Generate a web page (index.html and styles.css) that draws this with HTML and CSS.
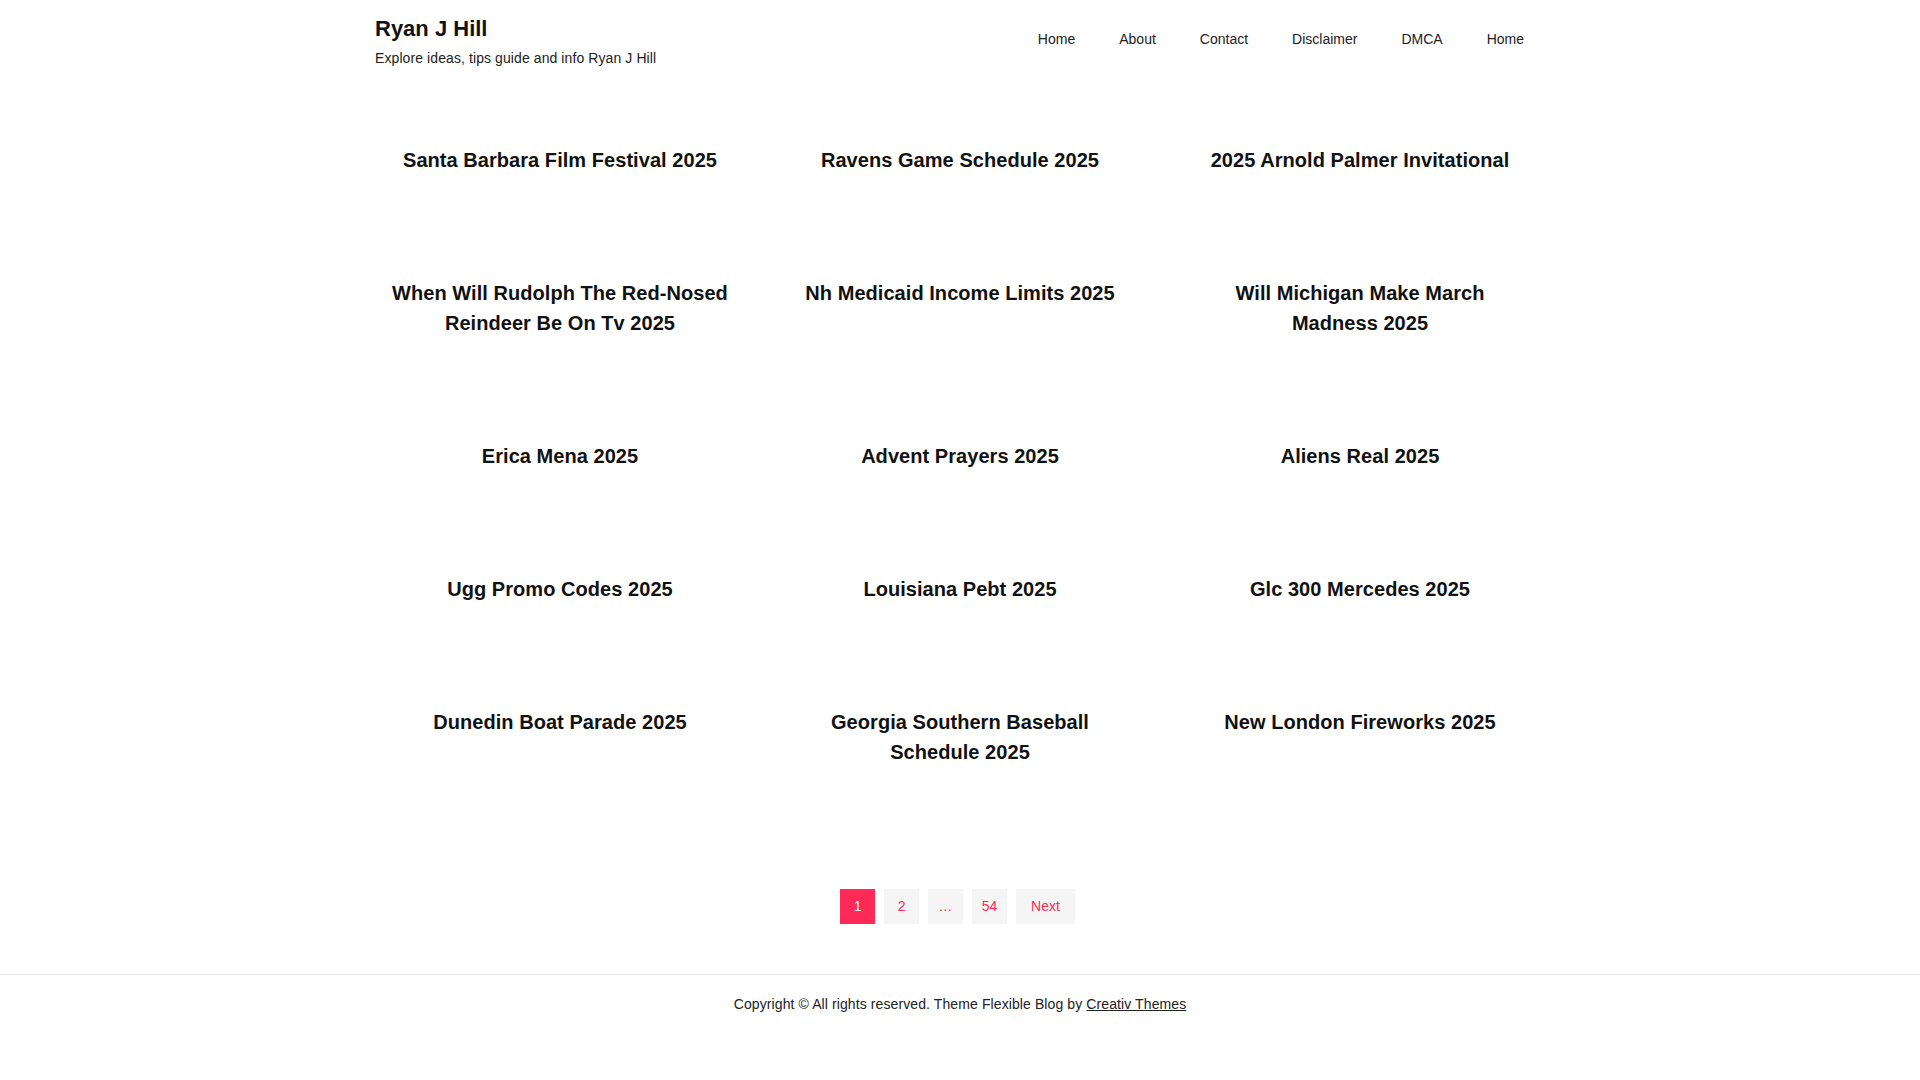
FILE: index.html
```html
<!DOCTYPE html>
<html lang="en">
<head>
<meta charset="utf-8">
<title>Ryan J Hill</title>
<link rel="stylesheet" href="styles.css">
</head>
<body>
<header class="site-header">
  <div class="container header-inner">
    <div class="branding">
      <div class="site-title">Ryan J Hill</div>
      <div class="site-desc">Explore ideas, tips guide and info Ryan J Hill</div>
    </div>
    <nav class="main-nav">
      <a href="#">Home</a>
      <a href="#">About</a>
      <a href="#">Contact</a>
      <a href="#">Disclaimer</a>
      <a href="#">DMCA</a>
      <a href="#">Home</a>
    </nav>
  </div>
</header>
<main class="container main">
  <div class="posts">
    <article class="post"><h2 class="post-title">Santa Barbara Film Festival 2025</h2></article>
    <article class="post"><h2 class="post-title">Ravens Game Schedule 2025</h2></article>
    <article class="post"><h2 class="post-title">2025 Arnold Palmer Invitational</h2></article>
    <article class="post"><h2 class="post-title">When Will Rudolph The Red-Nosed Reindeer Be On Tv 2025</h2></article>
    <article class="post"><h2 class="post-title">Nh Medicaid Income Limits 2025</h2></article>
    <article class="post"><h2 class="post-title">Will Michigan Make March Madness 2025</h2></article>
    <article class="post"><h2 class="post-title">Erica Mena 2025</h2></article>
    <article class="post"><h2 class="post-title">Advent Prayers 2025</h2></article>
    <article class="post"><h2 class="post-title">Aliens Real 2025</h2></article>
    <article class="post"><h2 class="post-title">Ugg Promo Codes 2025</h2></article>
    <article class="post"><h2 class="post-title">Louisiana Pebt 2025</h2></article>
    <article class="post"><h2 class="post-title">Glc 300 Mercedes 2025</h2></article>
    <article class="post"><h2 class="post-title">Dunedin Boat Parade 2025</h2></article>
    <article class="post"><h2 class="post-title">Georgia Southern Baseball Schedule 2025</h2></article>
    <article class="post"><h2 class="post-title">New London Fireworks 2025</h2></article>
  </div>
  <nav class="pagination">
    <span class="page current">1</span>
    <a class="page" href="#">2</a>
    <span class="page dots">…</span>
    <a class="page" href="#">54</a>
    <a class="page next" href="#">Next</a>
  </nav>
</main>
<footer class="site-footer">
  <p class="copyright">Copyright © All rights reserved. Theme Flexible Blog by <a href="#">Creativ Themes</a></p>
</footer>
</body>
</html>
```
FILE: styles.css
```css
html, body {
  margin: 0;
  padding: 0;
  background: #fff;
}
body {
  font-family: "Liberation Sans", Arial, sans-serif;
  color: #222;
}
.container {
  width: 1170px;
  margin: 0 auto;
}
.site-header {
  padding-top: 15px;
}
.header-inner {
  display: flex;
  justify-content: space-between;
  align-items: flex-start;
}
.site-title {
  font-size: 22px;
  line-height: 27px;
  font-weight: bold;
  color: #111;
}
.site-desc {
  margin-top: 6px;
  font-size: 14px;
  line-height: 21px;
  letter-spacing: 0.09px;
  color: #222;
}
.main-nav {
  display: flex;
  margin-top: 13.5px;
  margin-right: -1px;
}
.main-nav a {
  padding: 0 22px;
  font-size: 14px;
  line-height: 21px;
  color: #222;
  text-decoration: none;
}
.main {
  padding-top: 25px;
}
.posts {
  display: grid;
  grid-template-columns: repeat(3, 370px);
  column-gap: 30px;
}
.post {
  padding: 51px 17px 52px;
  text-align: center;
}
.post-title {
  margin: 0;
  font-size: 20px;
  line-height: 30px;
  font-weight: bold;
  letter-spacing: 0.05px;
  color: #111;
}
.pagination {
  display: flex;
  justify-content: center;
  gap: 9px;
  margin: 70px 0 50px;
  padding-right: 5px;
}
.page {
  display: block;
  min-width: 35px;
  height: 35px;
  line-height: 35px;
  text-align: center;
  font-size: 14px;
  background: #f5f5f5;
  color: #ff2b56;
  text-decoration: none;
  box-sizing: border-box;
}
.page.current {
  background: #ff2b56;
  color: #fff;
}
.page.next {
  padding: 0 15px;
}
.site-footer {
  border-top: 1px solid #e5e5e5;
  padding: 19px 0 60px;
}
.copyright {
  margin: 0;
  text-align: center;
  font-size: 14px;
  line-height: 21px;
  letter-spacing: 0.1px;
  color: #222;
}
.copyright a {
  color: #222;
  text-decoration: underline;
}
```
